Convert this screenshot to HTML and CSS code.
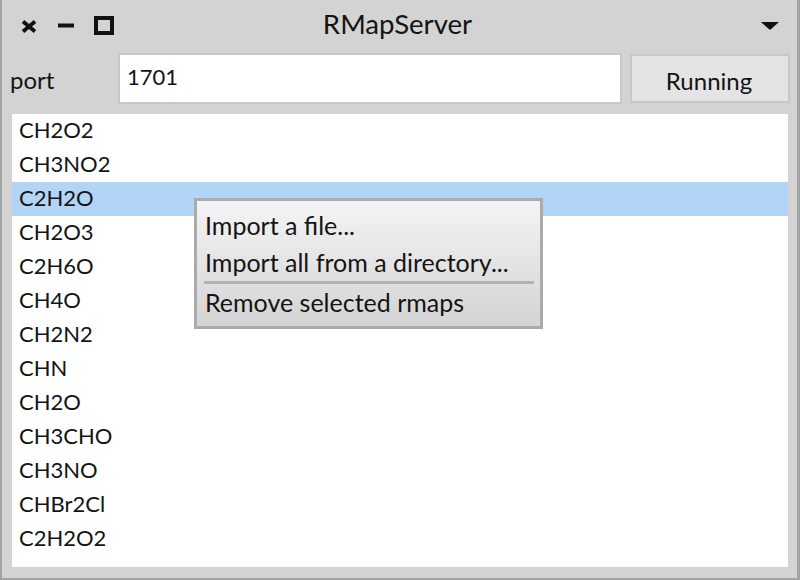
FILE: index.html
```html
<!DOCTYPE html>
<html>
<head>
<meta charset="utf-8">
<link rel="stylesheet" href="styles.css">
</head>
<body>
<div class="window">
  <div class="titlebar">
    <div class="controls">
      <svg class="ic-close" width="16" height="13" viewBox="0 0 16 13"><path d="M2 1.5 L14 11.5 M14 1.5 L2 11.5" stroke="#111" stroke-width="3.8" stroke-linecap="butt"/></svg>
      <svg class="ic-min" width="16" height="5" viewBox="0 0 16 5"><rect x="0" y="0.5" width="16" height="4" fill="#111"/></svg>
      <svg class="ic-max" width="20" height="19" viewBox="0 0 20 19"><rect x="2" y="2" width="16" height="15" fill="none" stroke="#111" stroke-width="4"/></svg>
    </div>
    <div class="title">RMapServer</div>
    <div class="menu-btn">
      <svg width="18" height="8" viewBox="0 0 18 8"><path d="M0 0 H18 L9 8 Z" fill="#111"/></svg>
    </div>
  </div>
  <div class="portrow">
    <div class="label">port</div>
    <div class="field">1701</div>
    <div class="button">Running</div>
  </div>
  <div class="list">
    <div class="row">CH2O2</div>
    <div class="row">CH3NO2</div>
    <div class="row selected">C2H2O</div>
    <div class="row">CH2O3</div>
    <div class="row">C2H6O</div>
    <div class="row">CH4O</div>
    <div class="row">CH2N2</div>
    <div class="row">CHN</div>
    <div class="row">CH2O</div>
    <div class="row">CH3CHO</div>
    <div class="row">CH3NO</div>
    <div class="row">CHBr2Cl</div>
    <div class="row">C2H2O2</div>
  </div>
  <div class="context">
    <div class="item">Import a file...</div>
    <div class="item">Import all from a directory...</div>
    <div class="sep"></div>
    <div class="item">Remove selected rmaps</div>
  </div>
</div>
</body>
</html>
```

FILE: styles.css
```css
html, body {
  margin: 0;
  padding: 0;
  width: 800px;
  height: 580px;
  overflow: hidden;
  background: #d3d3d3;
}
.window {
  position: relative;
  box-sizing: border-box;
  width: 800px;
  height: 580px;
  background: #d3d3d3;
  border-left: 2px solid #a3a3a3;
  border-right: 3px solid #a3a3a3;
  border-bottom: 2px solid #a3a3a3;
  display: flex;
  flex-direction: column;
  font-family: "Lato", "Liberation Sans", sans-serif;
  color: #141414;
}
.titlebar {
  height: 53px;
  display: grid;
  grid-template-columns: 1fr auto 1fr;
  align-items: start;
}
.controls {
  display: flex;
  align-items: flex-start;
  padding-left: 19px;
}
.ic-close { margin-top: 20px; }
.ic-min { margin-top: 23px; margin-left: 21px; }
.ic-max { margin-top: 16px; margin-left: 20px; }
.title {
  font-size: 27.6px;
  line-height: 48px;
  padding-right: 4px;
}
.menu-btn {
  display: flex;
  justify-content: flex-end;
  padding-right: 18px;
  padding-top: 22px;
}
.menu-btn svg { display: block; }
.portrow {
  height: 51px;
  display: flex;
  align-items: center;
  padding: 0 7px 0 8px;
}
.label {
  width: 108px;
  font-size: 24px;
  line-height: 28px;
  padding-top: 2px;
}
.field {
  flex: 1;
  box-sizing: border-box;
  height: 51px;
  border: 2px solid #c8c8c8;
  background: #fff;
  font-size: 22px;
  line-height: 44px;
  padding-left: 7px;
}
.button {
  margin-left: 8px;
  box-sizing: border-box;
  width: 160px;
  height: 49px;
  border: 2px solid #c8c8c8;
  background: #e4e4e4;
  font-size: 24px;
  line-height: 50px;
  text-align: center;
  padding-right: 2px;
}
.list {
  flex: 1;
  margin: 10px 9px 11px 10px;
  background: #fff;
}
.row {
  height: 34px;
  line-height: 32px;
  font-size: 22px;
  padding-left: 7px;
}
.row.selected {
  background: #b1d4f7;
}
.context {
  position: absolute;
  left: 192px;
  top: 198px;
  width: 349px;
  height: 131px;
  box-sizing: border-box;
  border: 3px solid #ababab;
  background: linear-gradient(#f4f4f4, #d4d4d4);
  padding: 6px 0 5px 0;
}
.item {
  height: 37px;
  line-height: 36px;
  font-size: 25px;
  padding-left: 8px;
  white-space: nowrap;
}
.sep {
  height: 3px;
  margin: 0 6px 0 7px;
  background: #b4b4b4;
}
```
